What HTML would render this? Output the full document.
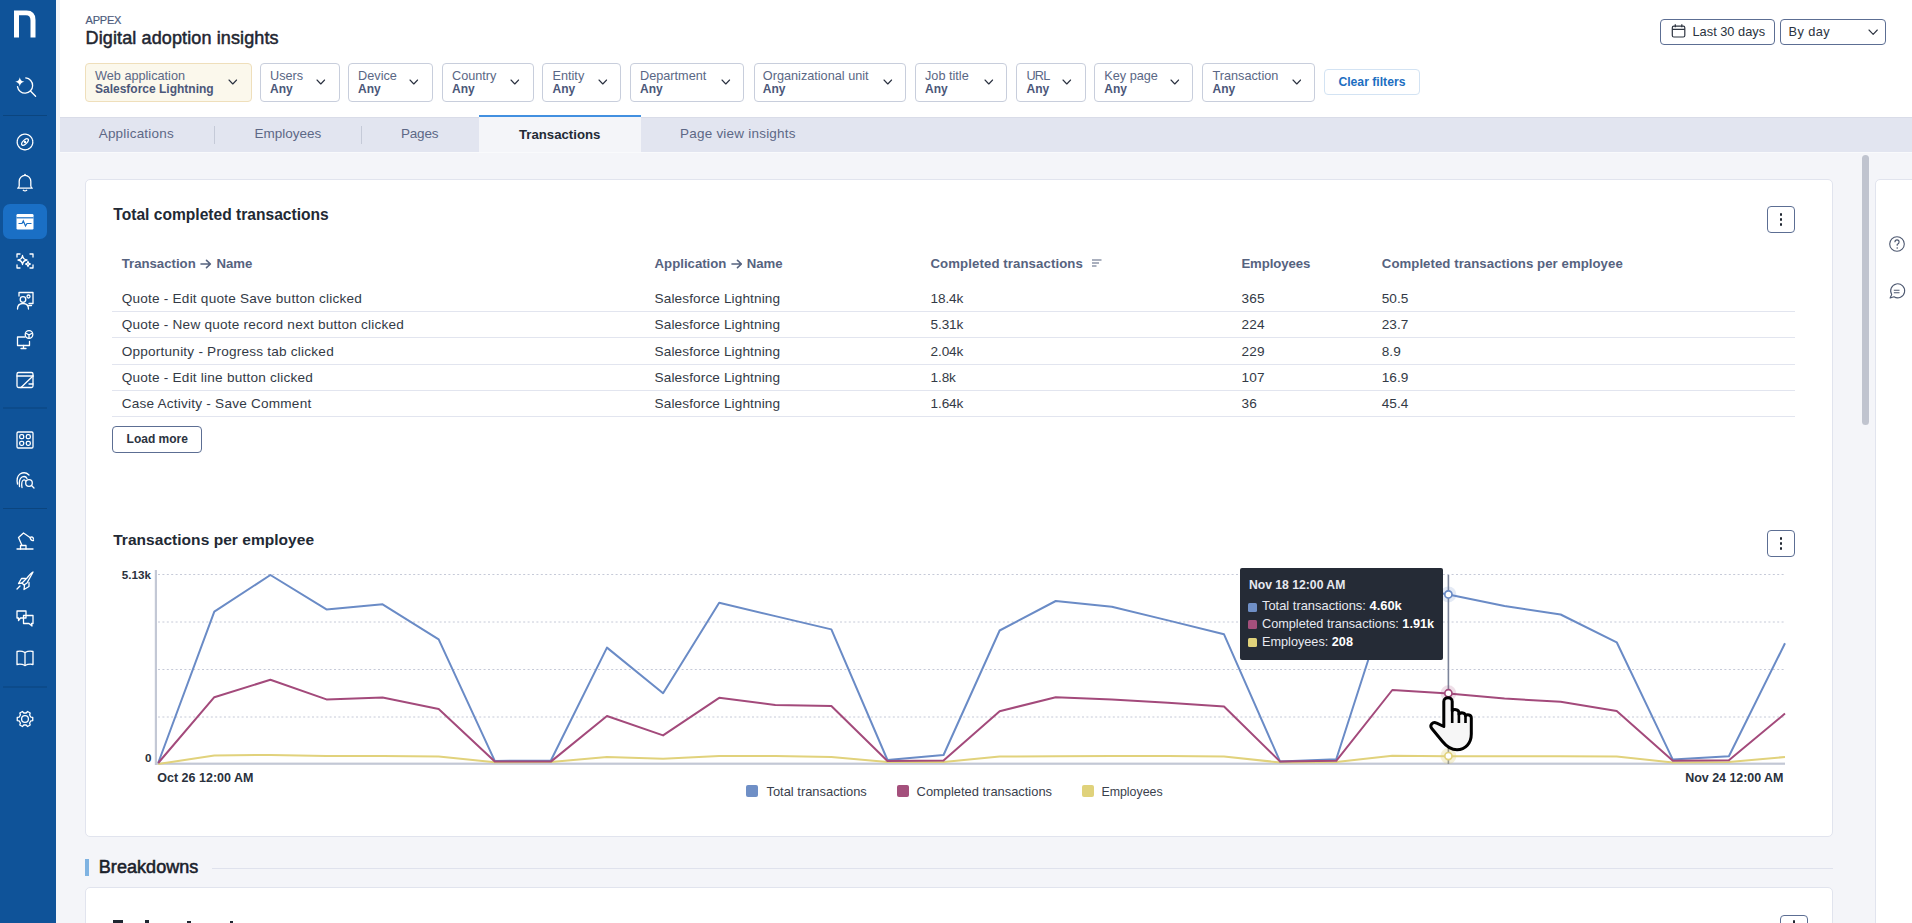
<!DOCTYPE html>
<html><head><meta charset="utf-8"><title>Digital adoption insights</title>
<style>
*{box-sizing:border-box;margin:0;padding:0}
html,body{width:1912px;height:923px;overflow:hidden;background:#ffffff;font-family:"Liberation Sans", sans-serif;}
.a{position:absolute;white-space:nowrap}
.t{position:absolute;white-space:nowrap;line-height:1}
.chip{position:absolute;top:63px;height:39px;border:1px solid #c8cedc;border-radius:4px;background:#fff}
.chev{position:absolute}
</style></head><body>

<div class="a" style="left:56px;top:0;width:1856px;height:923px;background:#f4f5f9"></div>
<div class="a" style="left:60px;top:0;width:1852px;height:117px;background:#ffffff"></div>
<div class="a" style="left:60px;top:117px;width:1852px;height:35px;background:#e2e5f0;border-top:1px solid #d9dce8"></div>
<div class="a" style="left:60px;top:152px;width:1852px;height:1px;background:#f9fafc"></div>
<div class="a" style="left:0;top:0;width:56px;height:923px;background:#0f5399"></div>
<svg class="a" style="left:0;top:0" width="56" height="923" viewBox="0 0 56 923">
<path d="M14 37.5 V10.5 H26.5 Q35.5 10.5 35.5 20 V37.5 H30.5 V20.5 Q30.5 15.2 26 15.2 H19 V37.5 Z" fill="#fff"/>
<g fill="none" stroke="#fff" stroke-width="1.3" stroke-linecap="round" stroke-linejoin="round"><path d="M25.8 77.95 A7.6 7.6 0 1 1 17.5 86.6"/><path d="M30.7 91.2 L35.6 96.3"/></g>
<path d="M19.8 77.2 Q20.4 81.2 24.4 81.8 Q20.4 82.4 19.8 86.4 Q19.2 82.4 15.2 81.8 Q19.2 81.2 19.8 77.2Z" fill="#fff"/>
<rect x="3" y="115.0" width="44" height="1" fill="#0b457f"/>
<rect x="3" y="407.5" width="44" height="1" fill="#0b457f"/>
<rect x="3" y="508.0" width="44" height="1" fill="#0b457f"/>
<rect x="3" y="686.5" width="44" height="1" fill="#0b457f"/>
<g fill="none" stroke="#fff" stroke-width="1.3" stroke-linecap="round" stroke-linejoin="round"><circle cx="25" cy="142" r="7.8" stroke-dasharray="1.6 0.7"/><ellipse cx="25" cy="142" rx="4.2" ry="2" transform="rotate(-45 25 142)"/><circle cx="25" cy="142" r="0.6" fill="#fff"/></g>
<g fill="none" stroke="#fff" stroke-width="1.3" stroke-linecap="round" stroke-linejoin="round"><path d="M19.2 186 V181.2 A5.8 5.8 0 0 1 30.8 181.2 V186 Q31 187.5 32.3 188.2 H17.7 Q19 187.5 19.2 186 Z"/><path d="M23.3 190.3 Q25 191.6 26.7 190.3"/><path d="M25 174.3 V175.3"/></g>
<rect x="3" y="204" width="44" height="35" rx="7" fill="#1a6fc5"/>
<rect x="16.5" y="214" width="17" height="15.5" rx="1.2" fill="#fff"/>
<rect x="16.5" y="217.2" width="17" height="1.2" fill="#1a6fc5"/>
<path d="M18.5 223.5 H22 L23.3 221 L25.5 226 L27 223.5 H31.5" fill="none" stroke="#1a6fc5" stroke-width="1.2"/>
<g fill="none" stroke="#fff" stroke-width="1.3" stroke-linecap="round" stroke-linejoin="round"><path d="M17 257 V254 H20 M30 254 H33 V257 M33 265 V268 H30 M20 268 H17 V265"/><path d="M22.5 255.5 Q23 259.5 27 260 Q23 260.5 22.5 264.5 Q22 260.5 18 260 Q22 259.5 22.5 255.5Z"/><path d="M28 261.5 Q28.3 263.7 30.3 264 Q28.3 264.3 28 266.5 Q27.7 264.3 25.7 264 Q27.7 263.7 28 261.5Z"/></g>
<g fill="none" stroke="#fff" stroke-width="1.3" stroke-linecap="round" stroke-linejoin="round"><path d="M19 296 V292.5 H33 V303.5 H29"/><circle cx="23" cy="299.5" r="2.8"/><path d="M17.5 309 Q17.5 303.5 23 303.5 Q28.5 303.5 28.5 309"/><circle cx="28.5" cy="296.5" r="1.5"/><path d="M28.5 305.5 H31.5"/></g>
<g fill="none" stroke="#fff" stroke-width="1.3" stroke-linecap="round" stroke-linejoin="round"><path d="M25 337 H17.5 V345.5 H29.5 V341.5"/><path d="M21 348.5 H26 M23.5 345.5 V348.5"/><circle cx="29" cy="334.5" r="3.8"/><path d="M26.5 333.5 L29 335 L31.5 333.5 M29 335 V338"/></g>
<g fill="none" stroke="#fff" stroke-width="1.3" stroke-linecap="round" stroke-linejoin="round"><rect x="17" y="372.5" width="16" height="15" rx="1.5"/><path d="M17 376 H33"/><path d="M21 387.5 L33 376"/><path d="M29 384 H33"/></g>
<g fill="none" stroke="#fff" stroke-width="1.3" stroke-linecap="round" stroke-linejoin="round"><rect x="17" y="432" width="16" height="16" rx="1.2"/><rect x="19.7" y="434.7" width="4" height="4" rx="1.5"/><rect x="26.3" y="434.7" width="4" height="4" rx="1.5"/><rect x="19.7" y="441.3" width="4" height="4" rx="1.5"/><rect x="26.3" y="441.3" width="4" height="4" rx="1.5"/></g>
<g fill="none" stroke="#fff" stroke-width="1.3" stroke-linecap="round" stroke-linejoin="round"><path d="M17.5 484 Q16 477 20 474 Q25 471 29 475"/><path d="M19.5 486.5 Q18.5 479 22 477 Q25.5 475.5 27 478.5"/><path d="M22 487.5 Q21 481 23.5 480 Q25 479.5 25.5 481"/><circle cx="29" cy="483" r="3.3"/><path d="M31.5 485.5 L34 488"/></g>
<g fill="none" stroke="#fff" stroke-width="1.3" stroke-linecap="round" stroke-linejoin="round"><path d="M17 549 H33"/><path d="M20.5 549 V545.5 H26 V549"/><path d="M22 545.5 L18.5 537.5 L23.5 533 L30 537.5"/><path d="M30 537.5 Q33 536 33.5 539 M30 537.5 Q31 541 33.5 540.5"/></g>
<g fill="none" stroke="#fff" stroke-width="1.3" stroke-linecap="round" stroke-linejoin="round"><path d="M22 583 L27 578 Q31 573 33 572 Q32 574 27 583 L24 585 Z"/><path d="M22.5 583 L18.5 583.5 L21.5 578.5 H25.5"/><path d="M24.5 585.5 L24 589.5 L29 586.5 V582.5"/><path d="M20 586 L17 589"/></g>
<g fill="none" stroke="#fff" stroke-width="1.3" stroke-linecap="round" stroke-linejoin="round"><path d="M17 611 H26 V618 H20.5 L18.5 620.5 V618 H17 Z"/><path d="M23.5 619.5 V615.5 H33 V623.5 H31.5 L32 626 L29 623.5 H23.5 Z"/></g>
<g fill="none" stroke="#fff" stroke-width="1.3" stroke-linecap="round" stroke-linejoin="round"><path d="M17 651.5 Q21 650.5 25 652.5 Q29 650.5 33 651.5 V664.5 Q29 663.5 25 665.5 Q21 663.5 17 664.5 Z"/><path d="M25 652.5 V665.5"/></g>
<g fill="none" stroke="#fff" stroke-width="1.3" stroke-linecap="round" stroke-linejoin="round"><polygon points="30.77,717.01 32.75,717.49 32.75,720.51 30.77,720.99 29.60,723.00 30.18,724.96 27.57,726.47 26.16,724.99 23.84,724.99 22.43,726.47 19.82,724.96 20.40,723.00 19.23,720.99 17.25,720.51 17.25,717.49 19.23,717.01 20.40,715.00 19.82,713.04 22.43,711.53 23.84,713.01 26.16,713.01 27.57,711.53 30.18,713.04 29.60,715.00"/><circle cx="25" cy="719" r="3.4"/></g>
</svg>
<div class="t" style="left:85.50px;top:14.69px;font-size:11px;font-weight:400;color:#4d5b7c;letter-spacing:-0.2px;-webkit-text-stroke:0.2px #4d5b7c;">APPEX</div>
<div class="t" style="left:85.60px;top:28.96px;font-size:18px;font-weight:400;color:#1f2631;letter-spacing:0.12px;-webkit-text-stroke:0.5px #1f2631;">Digital adoption insights</div>
<div class="chip" style="left:85px;width:167px;background:#fbf8ec;border-color:#efdfbb"></div>
<div class="t" style="left:95.00px;top:70.25px;font-size:12.7px;font-weight:400;color:#5a6785;">Web application</div>
<div class="t" style="left:95.00px;top:82.84px;font-size:12px;font-weight:700;color:#4b5779;">Salesforce Lightning</div>
<svg class="a" style="left:228.00px;top:79.00px" width="9.6" height="6"><path d="M1 1 L4.8 5 L8.6 1" fill="none" stroke="#2a3140" stroke-width="1.1" stroke-linecap="round" stroke-linejoin="round"/></svg>
<div class="chip" style="left:260px;width:80px"></div>
<div class="t" style="left:270.00px;top:70.25px;font-size:12.7px;font-weight:400;color:#5a6785;">Users</div>
<div class="t" style="left:270.00px;top:82.84px;font-size:12px;font-weight:700;color:#4b5779;">Any</div>
<svg class="a" style="left:316.20px;top:79.00px" width="9.6" height="6"><path d="M1 1 L4.8 5 L8.6 1" fill="none" stroke="#2a3140" stroke-width="1.1" stroke-linecap="round" stroke-linejoin="round"/></svg>
<div class="chip" style="left:348px;width:85px"></div>
<div class="t" style="left:358.10px;top:70.25px;font-size:12.7px;font-weight:400;color:#5a6785;">Device</div>
<div class="t" style="left:358.10px;top:82.84px;font-size:12px;font-weight:700;color:#4b5779;">Any</div>
<svg class="a" style="left:409.20px;top:79.00px" width="9.6" height="6"><path d="M1 1 L4.8 5 L8.6 1" fill="none" stroke="#2a3140" stroke-width="1.1" stroke-linecap="round" stroke-linejoin="round"/></svg>
<div class="chip" style="left:442px;width:92px"></div>
<div class="t" style="left:452.00px;top:70.25px;font-size:12.7px;font-weight:400;color:#5a6785;">Country</div>
<div class="t" style="left:452.00px;top:82.84px;font-size:12px;font-weight:700;color:#4b5779;">Any</div>
<svg class="a" style="left:510.20px;top:79.00px" width="9.6" height="6"><path d="M1 1 L4.8 5 L8.6 1" fill="none" stroke="#2a3140" stroke-width="1.1" stroke-linecap="round" stroke-linejoin="round"/></svg>
<div class="chip" style="left:542px;width:79px"></div>
<div class="t" style="left:552.50px;top:70.25px;font-size:12.7px;font-weight:400;color:#5a6785;">Entity</div>
<div class="t" style="left:552.50px;top:82.84px;font-size:12px;font-weight:700;color:#4b5779;">Any</div>
<svg class="a" style="left:598.00px;top:79.00px" width="9.6" height="6"><path d="M1 1 L4.8 5 L8.6 1" fill="none" stroke="#2a3140" stroke-width="1.1" stroke-linecap="round" stroke-linejoin="round"/></svg>
<div class="chip" style="left:630px;width:114px"></div>
<div class="t" style="left:640.00px;top:70.25px;font-size:12.7px;font-weight:400;color:#5a6785;">Department</div>
<div class="t" style="left:640.00px;top:82.84px;font-size:12px;font-weight:700;color:#4b5779;">Any</div>
<svg class="a" style="left:721.20px;top:79.00px" width="9.6" height="6"><path d="M1 1 L4.8 5 L8.6 1" fill="none" stroke="#2a3140" stroke-width="1.1" stroke-linecap="round" stroke-linejoin="round"/></svg>
<div class="chip" style="left:754px;width:152px"></div>
<div class="t" style="left:762.80px;top:70.25px;font-size:12.7px;font-weight:400;color:#5a6785;">Organizational unit</div>
<div class="t" style="left:762.80px;top:82.84px;font-size:12px;font-weight:700;color:#4b5779;">Any</div>
<svg class="a" style="left:883.20px;top:79.00px" width="9.6" height="6"><path d="M1 1 L4.8 5 L8.6 1" fill="none" stroke="#2a3140" stroke-width="1.1" stroke-linecap="round" stroke-linejoin="round"/></svg>
<div class="chip" style="left:915px;width:92px"></div>
<div class="t" style="left:925.00px;top:70.25px;font-size:12.7px;font-weight:400;color:#5a6785;">Job title</div>
<div class="t" style="left:925.00px;top:82.84px;font-size:12px;font-weight:700;color:#4b5779;">Any</div>
<svg class="a" style="left:984.20px;top:79.00px" width="9.6" height="6"><path d="M1 1 L4.8 5 L8.6 1" fill="none" stroke="#2a3140" stroke-width="1.1" stroke-linecap="round" stroke-linejoin="round"/></svg>
<div class="chip" style="left:1016px;width:70px"></div>
<div class="t" style="left:1026.50px;top:70.25px;font-size:12.7px;font-weight:400;color:#5a6785;letter-spacing:-0.8px;">URL</div>
<div class="t" style="left:1026.50px;top:82.84px;font-size:12px;font-weight:700;color:#4b5779;">Any</div>
<svg class="a" style="left:1062.20px;top:79.00px" width="9.6" height="6"><path d="M1 1 L4.8 5 L8.6 1" fill="none" stroke="#2a3140" stroke-width="1.1" stroke-linecap="round" stroke-linejoin="round"/></svg>
<div class="chip" style="left:1094px;width:99px"></div>
<div class="t" style="left:1104.30px;top:70.25px;font-size:12.7px;font-weight:400;color:#5a6785;">Key page</div>
<div class="t" style="left:1104.30px;top:82.84px;font-size:12px;font-weight:700;color:#4b5779;">Any</div>
<svg class="a" style="left:1170.20px;top:79.00px" width="9.6" height="6"><path d="M1 1 L4.8 5 L8.6 1" fill="none" stroke="#2a3140" stroke-width="1.1" stroke-linecap="round" stroke-linejoin="round"/></svg>
<div class="chip" style="left:1202px;width:113px"></div>
<div class="t" style="left:1212.50px;top:70.25px;font-size:12.7px;font-weight:400;color:#5a6785;">Transaction</div>
<div class="t" style="left:1212.50px;top:82.84px;font-size:12px;font-weight:700;color:#4b5779;">Any</div>
<svg class="a" style="left:1291.50px;top:79.00px" width="9.6" height="6"><path d="M1 1 L4.8 5 L8.6 1" fill="none" stroke="#2a3140" stroke-width="1.1" stroke-linecap="round" stroke-linejoin="round"/></svg>
<div class="a" style="left:1324px;top:69px;width:95.5px;height:25.5px;border:1px solid #d3e3f3;border-radius:4px;background:#fff"></div>
<div class="t" style="left:1338.40px;top:75.77px;font-size:12.2px;font-weight:700;color:#1c6ec1;">Clear filters</div>
<div class="a" style="left:1660px;top:19px;width:115px;height:26px;border:1px solid #5c6e93;border-radius:4px;background:#fff"></div>
<svg class="a" style="left:1671px;top:23px" width="16" height="16" viewBox="0 0 16 16"><g fill="none" stroke="#2d3440" stroke-width="1.2"><rect x="1.3" y="3.2" width="12.5" height="10.8" rx="1.5"/><path d="M1.3 6.3 H13.8 M4.3 1.2 V4.2 M10.8 1.2 V4.2"/></g></svg>
<div class="t" style="left:1692.50px;top:25.86px;font-size:12.8px;font-weight:400;color:#2b3340;">Last 30 days</div>
<div class="a" style="left:1780px;top:19px;width:106px;height:26px;border:1px solid #5c6e93;border-radius:4px;background:#fff"></div>
<div class="t" style="left:1788.60px;top:25.86px;font-size:12.8px;font-weight:400;color:#2b3340;letter-spacing:0.4px;">By day</div>
<svg class="a" style="left:1867.55px;top:28.85px" width="10.3" height="6.3"><path d="M1 1 L5.15 5.3 L9.3 1" fill="none" stroke="#2d3440" stroke-width="1.1" stroke-linecap="round" stroke-linejoin="round"/></svg>
<div class="a" style="left:479px;top:115px;width:162px;height:37px;background:#f4f5f9;border-top:2px solid #4290e0"></div>
<div class="a" style="left:214.0px;top:126px;width:1px;height:17.5px;background:#c5cad8"></div>
<div class="a" style="left:361.3px;top:126px;width:1px;height:17.5px;background:#c5cad8"></div>
<div class="t" style="left:98.70px;top:127.27px;font-size:13.5px;font-weight:400;color:#5d6886;letter-spacing:0.2px;">Applications</div>
<div class="t" style="left:254.50px;top:127.27px;font-size:13.5px;font-weight:400;color:#5d6886;">Employees</div>
<div class="t" style="left:401.00px;top:127.27px;font-size:13.5px;font-weight:400;color:#5d6886;letter-spacing:-0.2px;">Pages</div>
<div class="t" style="left:519.00px;top:127.53px;font-size:13.2px;font-weight:700;color:#232a35;">Transactions</div>
<div class="t" style="left:680.00px;top:127.27px;font-size:13.5px;font-weight:400;color:#5d6886;letter-spacing:0.22px;">Page view insights</div>
<div class="a" style="left:1862px;top:155px;width:7px;height:270px;background:#c0c4cf;border-radius:4px"></div>
<div class="a" style="left:1875px;top:179px;width:60px;height:800px;background:#fff;border:1px solid #e1e4ee;border-radius:5px"></div>
<svg class="a" style="left:1886px;top:233px" width="22" height="70" viewBox="0 0 22 70"><g fill="none" stroke="#4d5870" stroke-width="1.1"><circle cx="11" cy="11" r="7.3"/><path d="M8.9 9.2 Q9 6.9 11 6.9 Q13.1 6.9 13.1 9 Q13.1 10.5 11.2 11.4 V12.8"/></g><circle cx="11.2" cy="15" r="0.8" fill="#4d5870"/><g fill="none" stroke="#4d5870" stroke-width="1.1" transform="translate(-1.5 0.5)"><path d="M5.6 64.5 L7.2 61 A7 7 0 1 1 9.5 63.3 Z" stroke-linejoin="round"/><path d="M9.3 56.7 H15 M9.3 59.2 H15"/></g></svg>
<div class="a" style="left:85px;top:179px;width:1748px;height:658px;background:#fff;border:1px solid #e1e4ee;border-radius:5px"></div>
<div class="t" style="left:113.30px;top:206.69px;font-size:15.6px;font-weight:700;color:#222934;">Total completed transactions</div>
<div class="a" style="left:1767px;top:206px;width:28px;height:27px;border:1px solid #5c6e93;border-radius:4px;background:#fff"></div>
<div class="a" style="left:1779.8px;top:213.3px;width:2.4px;height:2.4px;border-radius:50%;background:#1f2631"></div>
<div class="a" style="left:1779.8px;top:218.3px;width:2.4px;height:2.4px;border-radius:50%;background:#1f2631"></div>
<div class="a" style="left:1779.8px;top:223.3px;width:2.4px;height:2.4px;border-radius:50%;background:#1f2631"></div>
<div class="t" style="left:121.70px;top:256.73px;font-size:13.2px;font-weight:700;color:#56637f;">Transaction</div>
<svg class="a" style="left:200.40px;top:258.60px" width="11.8" height="10"><path d="M1 5 H10.3 M6.5 1.4 L10.4 5 L6.5 8.6" fill="none" stroke="#56637f" stroke-width="1.6" stroke-linecap="round" stroke-linejoin="round"/></svg>
<div class="t" style="left:216.50px;top:256.73px;font-size:13.2px;font-weight:700;color:#56637f;">Name</div>
<div class="t" style="left:654.60px;top:256.73px;font-size:13.2px;font-weight:700;color:#56637f;">Application</div>
<svg class="a" style="left:730.60px;top:258.60px" width="11.8" height="10"><path d="M1 5 H10.3 M6.5 1.4 L10.4 5 L6.5 8.6" fill="none" stroke="#56637f" stroke-width="1.6" stroke-linecap="round" stroke-linejoin="round"/></svg>
<div class="t" style="left:746.70px;top:256.73px;font-size:13.2px;font-weight:700;color:#56637f;">Name</div>
<div class="t" style="left:930.50px;top:256.73px;font-size:13.2px;font-weight:700;color:#56637f;letter-spacing:0.1px;">Completed transactions</div>
<svg class="a" style="left:1091px;top:258px" width="12" height="10"><g stroke="#56637f" stroke-width="1.2"><path d="M1 2 H10.5 M1 5 H8 M1 8 H5.5"/></g></svg>
<div class="t" style="left:1241.40px;top:256.73px;font-size:13.2px;font-weight:700;color:#56637f;letter-spacing:-0.1px;">Employees</div>
<div class="t" style="left:1381.80px;top:256.73px;font-size:13.2px;font-weight:700;color:#56637f;letter-spacing:0.06px;">Completed transactions per employee</div>
<div class="t" style="left:121.70px;top:291.99px;font-size:13.6px;font-weight:400;color:#333a46;letter-spacing:0.22px;">Quote - Edit quote Save button clicked</div>
<div class="t" style="left:654.60px;top:291.99px;font-size:13.6px;font-weight:400;color:#333a46;letter-spacing:0.12px;">Salesforce Lightning</div>
<div class="t" style="left:930.50px;top:291.99px;font-size:13.6px;font-weight:400;color:#333a46;letter-spacing:-0.1px;">18.4k</div>
<div class="t" style="left:1241.40px;top:291.99px;font-size:13.6px;font-weight:400;color:#333a46;letter-spacing:0.2px;">365</div>
<div class="t" style="left:1381.80px;top:291.99px;font-size:13.6px;font-weight:400;color:#333a46;">50.5</div>
<div class="a" style="left:112px;top:311.00px;width:1683px;height:1px;background:#e2e5ef"></div>
<div class="t" style="left:121.70px;top:318.09px;font-size:13.6px;font-weight:400;color:#333a46;letter-spacing:0.22px;">Quote - New quote record next button clicked</div>
<div class="t" style="left:654.60px;top:318.09px;font-size:13.6px;font-weight:400;color:#333a46;letter-spacing:0.12px;">Salesforce Lightning</div>
<div class="t" style="left:930.50px;top:318.09px;font-size:13.6px;font-weight:400;color:#333a46;letter-spacing:-0.1px;">5.31k</div>
<div class="t" style="left:1241.40px;top:318.09px;font-size:13.6px;font-weight:400;color:#333a46;letter-spacing:0.2px;">224</div>
<div class="t" style="left:1381.80px;top:318.09px;font-size:13.6px;font-weight:400;color:#333a46;">23.7</div>
<div class="a" style="left:112px;top:337.25px;width:1683px;height:1px;background:#e2e5ef"></div>
<div class="t" style="left:121.70px;top:344.69px;font-size:13.6px;font-weight:400;color:#333a46;letter-spacing:0.22px;">Opportunity - Progress tab clicked</div>
<div class="t" style="left:654.60px;top:344.69px;font-size:13.6px;font-weight:400;color:#333a46;letter-spacing:0.12px;">Salesforce Lightning</div>
<div class="t" style="left:930.50px;top:344.69px;font-size:13.6px;font-weight:400;color:#333a46;letter-spacing:-0.1px;">2.04k</div>
<div class="t" style="left:1241.40px;top:344.69px;font-size:13.6px;font-weight:400;color:#333a46;letter-spacing:0.2px;">229</div>
<div class="t" style="left:1381.80px;top:344.69px;font-size:13.6px;font-weight:400;color:#333a46;">8.9</div>
<div class="a" style="left:112px;top:363.50px;width:1683px;height:1px;background:#e2e5ef"></div>
<div class="t" style="left:121.70px;top:370.79px;font-size:13.6px;font-weight:400;color:#333a46;letter-spacing:0.22px;">Quote - Edit line button clicked</div>
<div class="t" style="left:654.60px;top:370.79px;font-size:13.6px;font-weight:400;color:#333a46;letter-spacing:0.12px;">Salesforce Lightning</div>
<div class="t" style="left:930.50px;top:370.79px;font-size:13.6px;font-weight:400;color:#333a46;letter-spacing:-0.1px;">1.8k</div>
<div class="t" style="left:1241.40px;top:370.79px;font-size:13.6px;font-weight:400;color:#333a46;letter-spacing:0.2px;">107</div>
<div class="t" style="left:1381.80px;top:370.79px;font-size:13.6px;font-weight:400;color:#333a46;">16.9</div>
<div class="a" style="left:112px;top:389.75px;width:1683px;height:1px;background:#e2e5ef"></div>
<div class="t" style="left:121.70px;top:396.89px;font-size:13.6px;font-weight:400;color:#333a46;letter-spacing:0.22px;">Case Activity - Save Comment</div>
<div class="t" style="left:654.60px;top:396.89px;font-size:13.6px;font-weight:400;color:#333a46;letter-spacing:0.12px;">Salesforce Lightning</div>
<div class="t" style="left:930.50px;top:396.89px;font-size:13.6px;font-weight:400;color:#333a46;letter-spacing:-0.1px;">1.64k</div>
<div class="t" style="left:1241.40px;top:396.89px;font-size:13.6px;font-weight:400;color:#333a46;letter-spacing:0.2px;">36</div>
<div class="t" style="left:1381.80px;top:396.89px;font-size:13.6px;font-weight:400;color:#333a46;">45.4</div>
<div class="a" style="left:112px;top:416.00px;width:1683px;height:1px;background:#e2e5ef"></div>
<div class="a" style="left:112px;top:426px;width:90px;height:27px;border:1px solid #5c6e93;border-radius:4px;background:#fff"></div>
<div class="t" style="left:126.60px;top:433.04px;font-size:12px;font-weight:700;color:#2b3340;">Load more</div>
<div class="t" style="left:113.20px;top:532.08px;font-size:15.5px;font-weight:700;color:#222934;letter-spacing:0.04px;">Transactions per employee</div>
<div class="a" style="left:1767px;top:530px;width:28px;height:27px;border:1px solid #5c6e93;border-radius:4px;background:#fff"></div>
<div class="a" style="left:1779.8px;top:537.3px;width:2.4px;height:2.4px;border-radius:50%;background:#1f2631"></div>
<div class="a" style="left:1779.8px;top:542.3px;width:2.4px;height:2.4px;border-radius:50%;background:#1f2631"></div>
<div class="a" style="left:1779.8px;top:547.3px;width:2.4px;height:2.4px;border-radius:50%;background:#1f2631"></div>
<svg class="a" style="left:0;top:0;overflow:visible" width="1912" height="923">
<line x1="158" y1="574.5" x2="1785" y2="574.5" stroke="#c6cad8" stroke-width="1" stroke-dasharray="2 2.4"/>
<line x1="158" y1="622" x2="1785" y2="622" stroke="#c6cad8" stroke-width="1" stroke-dasharray="2 2.4"/>
<line x1="158" y1="669.5" x2="1785" y2="669.5" stroke="#c6cad8" stroke-width="1" stroke-dasharray="2 2.4"/>
<line x1="158" y1="717" x2="1785" y2="717" stroke="#c6cad8" stroke-width="1" stroke-dasharray="2 2.4"/>
<rect x="154.8" y="570" width="2.2" height="195" fill="#c3c8d5"/>
<rect x="155" y="762.6" width="1630" height="2.2" fill="#c3c8d5"/>
<polyline points="158.20,764.00 214.30,755.60 270.39,754.90 326.49,756.00 382.59,756.00 438.68,756.50 494.78,762.20 550.88,762.00 606.97,757.10 663.07,758.70 719.17,756.00 775.26,756.00 831.36,757.00 887.46,762.00 943.55,762.00 999.65,756.50 1055.74,756.30 1111.84,756.00 1167.94,756.00 1224.03,756.50 1280.13,762.50 1336.23,762.00 1392.32,755.80 1448.42,756.30 1504.52,756.30 1560.61,756.30 1616.71,756.60 1672.81,762.50 1728.90,762.00 1785.00,757.00" fill="none" stroke="#e1d27c" stroke-width="2" stroke-linejoin="round"/>
<polyline points="158.20,763.00 214.30,611.60 270.39,575.00 326.49,609.40 382.59,604.30 438.68,639.40 494.78,760.90 550.88,760.50 606.97,647.60 663.07,693.20 719.17,602.80 775.26,616.10 831.36,629.40 887.46,760.00 943.55,755.00 999.65,630.50 1055.74,601.00 1111.84,606.80 1167.94,620.40 1224.03,634.30 1280.13,761.60 1336.23,759.30 1392.32,585.20 1448.42,594.40 1504.52,605.90 1560.61,614.50 1616.71,642.30 1672.81,759.60 1728.90,756.30 1785.00,643.30" fill="none" stroke="#6a8bc6" stroke-width="2" stroke-linejoin="round"/>
<polyline points="158.20,763.00 214.30,697.20 270.39,679.80 326.49,699.40 382.59,697.60 438.68,708.90 494.78,761.60 550.88,761.60 606.97,716.00 663.07,735.40 719.17,697.80 775.26,705.00 831.36,706.00 887.46,761.00 943.55,760.50 999.65,711.20 1055.74,697.20 1111.84,699.40 1167.94,702.70 1224.03,706.50 1280.13,761.60 1336.23,760.80 1392.32,690.00 1448.42,693.50 1504.52,698.60 1560.61,701.80 1616.71,711.10 1672.81,760.80 1728.90,760.30 1785.00,713.60" fill="none" stroke="#a34a7b" stroke-width="2" stroke-linejoin="round"/>
<rect x="1447.6" y="575" width="1.6" height="189" fill="#7c849a"/>
<circle cx="1448.4" cy="594.4" r="8" fill="rgba(106,139,198,0.18)"/>
<circle cx="1448.4" cy="594.4" r="3.6" fill="#fff" stroke="#6a8bc6" stroke-width="1.7"/>
<circle cx="1448.4" cy="693.3" r="8" fill="rgba(163,74,123,0.18)"/>
<circle cx="1448.4" cy="693.3" r="3.6" fill="#fff" stroke="#a34a7b" stroke-width="1.7"/>
<circle cx="1448.4" cy="756.1" r="8" fill="rgba(225,210,124,0.3)"/>
<circle cx="1448.4" cy="756.1" r="3.6" fill="#fff" stroke="#e1d27c" stroke-width="1.7"/>
</svg>
<div class="t" style="left:121.70px;top:569.30px;font-size:11.7px;font-weight:700;color:#2a313c;">5.13k</div>
<div class="t" style="left:144.90px;top:751.90px;font-size:11.7px;font-weight:700;color:#2a313c;">0</div>
<div class="t" style="left:157.30px;top:771.92px;font-size:12.5px;font-weight:700;color:#2a313c;">Oct 26 12:00 AM</div>
<div class="t" style="left:1685.30px;top:771.62px;font-size:12.5px;font-weight:700;color:#2a313c;letter-spacing:-0.05px;">Nov 24 12:00 AM</div>
<div class="a" style="left:746px;top:785px;width:12.2px;height:12px;border-radius:2px;background:#6f8fc6"></div>
<div class="a" style="left:896.6px;top:785px;width:12.2px;height:12px;border-radius:2px;background:#a4507c"></div>
<div class="a" style="left:1081.8px;top:785px;width:12.2px;height:12px;border-radius:2px;background:#e0d27b"></div>
<div class="t" style="left:766.50px;top:785.78px;font-size:12.9px;font-weight:400;color:#3a414d;">Total transactions</div>
<div class="t" style="left:916.60px;top:785.78px;font-size:12.9px;font-weight:400;color:#3a414d;">Completed transactions</div>
<div class="t" style="left:1101.40px;top:786.20px;font-size:12.4px;font-weight:400;color:#3a414d;">Employees</div>
<div class="a" style="left:1240px;top:568px;width:203px;height:92px;background:#252b36;border-radius:2px"></div>
<div class="t" style="left:1248.90px;top:578.77px;font-size:12.2px;font-weight:700;color:#e7e9f0;">Nov 18 12:00 AM</div>
<div class="a" style="left:1248px;top:603px;width:9px;height:9px;border-radius:1.5px;background:#6f8fc6"></div>
<div class="a" style="left:1248px;top:620px;width:9px;height:9px;border-radius:1.5px;background:#a4507c"></div>
<div class="a" style="left:1248px;top:638px;width:9px;height:9px;border-radius:1.5px;background:#e0d27b"></div>
<div class="t" style="left:1262.00px;top:600.48px;font-size:12.9px;font-weight:400;color:#e7e9f0;">Total transactions: <b style="color:#fff">4.60k</b></div>
<div class="t" style="left:1262.00px;top:618.45px;font-size:12.7px;font-weight:400;color:#e7e9f0;">Completed transactions: <b style="color:#fff">1.91k</b></div>
<div class="t" style="left:1262.00px;top:636.45px;font-size:12.7px;font-weight:400;color:#e7e9f0;">Employees: <b style="color:#fff">208</b></div>
<svg class="a" style="left:1428px;top:695px" width="48" height="60" viewBox="-2 -2 48 60"><path d="M13.8 29.5 L13.8 4.5 C13.8 -0.6 22.2 -0.6 22.2 4.5 L22.2 13.8 C23.5 12 28.9 12 28.9 15.8 L28.9 17 C30.5 15.2 35.5 15.5 35.5 18.8 C37 17.2 41.3 17.6 41.3 21 L41.3 37 C41.3 46 35.5 52.7 27 52.7 C20.5 52.7 16.5 49.5 12.5 44.5 L1.8 31.5 C-0.8 28.3 2.8 23.8 6.8 26.2 Z" fill="#f6f6f6" stroke="#000" stroke-width="3" stroke-linejoin="round"/><path d="M22.2 13.5 V26 M28.9 16.5 V26 M35.5 18.5 V26" stroke="#000" stroke-width="2.6" fill="none"/></svg>
<div class="a" style="left:85px;top:859px;width:4px;height:17px;background:#7fb3e2"></div>
<div class="t" style="left:98.80px;top:858.36px;font-size:18px;font-weight:400;color:#1a212b;letter-spacing:0.05px;-webkit-text-stroke:0.55px #1a212b;">Breakdowns</div>
<div class="a" style="left:212px;top:868px;width:1621px;height:1px;background:#dfe2ed"></div>
<div class="a" style="left:85px;top:887px;width:1748px;height:200px;background:#fff;border:1px solid #e1e4ee;border-radius:5px"></div>
<div class="a" style="left:113.4px;top:920.4px;width:9.8px;height:3.6px;background:#1f2631"></div>
<div class="a" style="left:145.2px;top:919.6px;width:3.8px;height:4.4px;background:#1f2631"></div>
<div class="a" style="left:187px;top:921.2px;width:3.6px;height:2.8px;background:#1f2631"></div>
<div class="a" style="left:229.7px;top:921.2px;width:3.6px;height:2.8px;background:#1f2631"></div>
<div class="a" style="left:1780px;top:915px;width:28px;height:27px;border:1px solid #5c6e93;border-radius:4px;background:#fff"></div>
<div class="a" style="left:1792.6px;top:920px;width:2.6px;height:3px;border-radius:50% 50% 0 0;background:#1f2631"></div>
</body></html>
